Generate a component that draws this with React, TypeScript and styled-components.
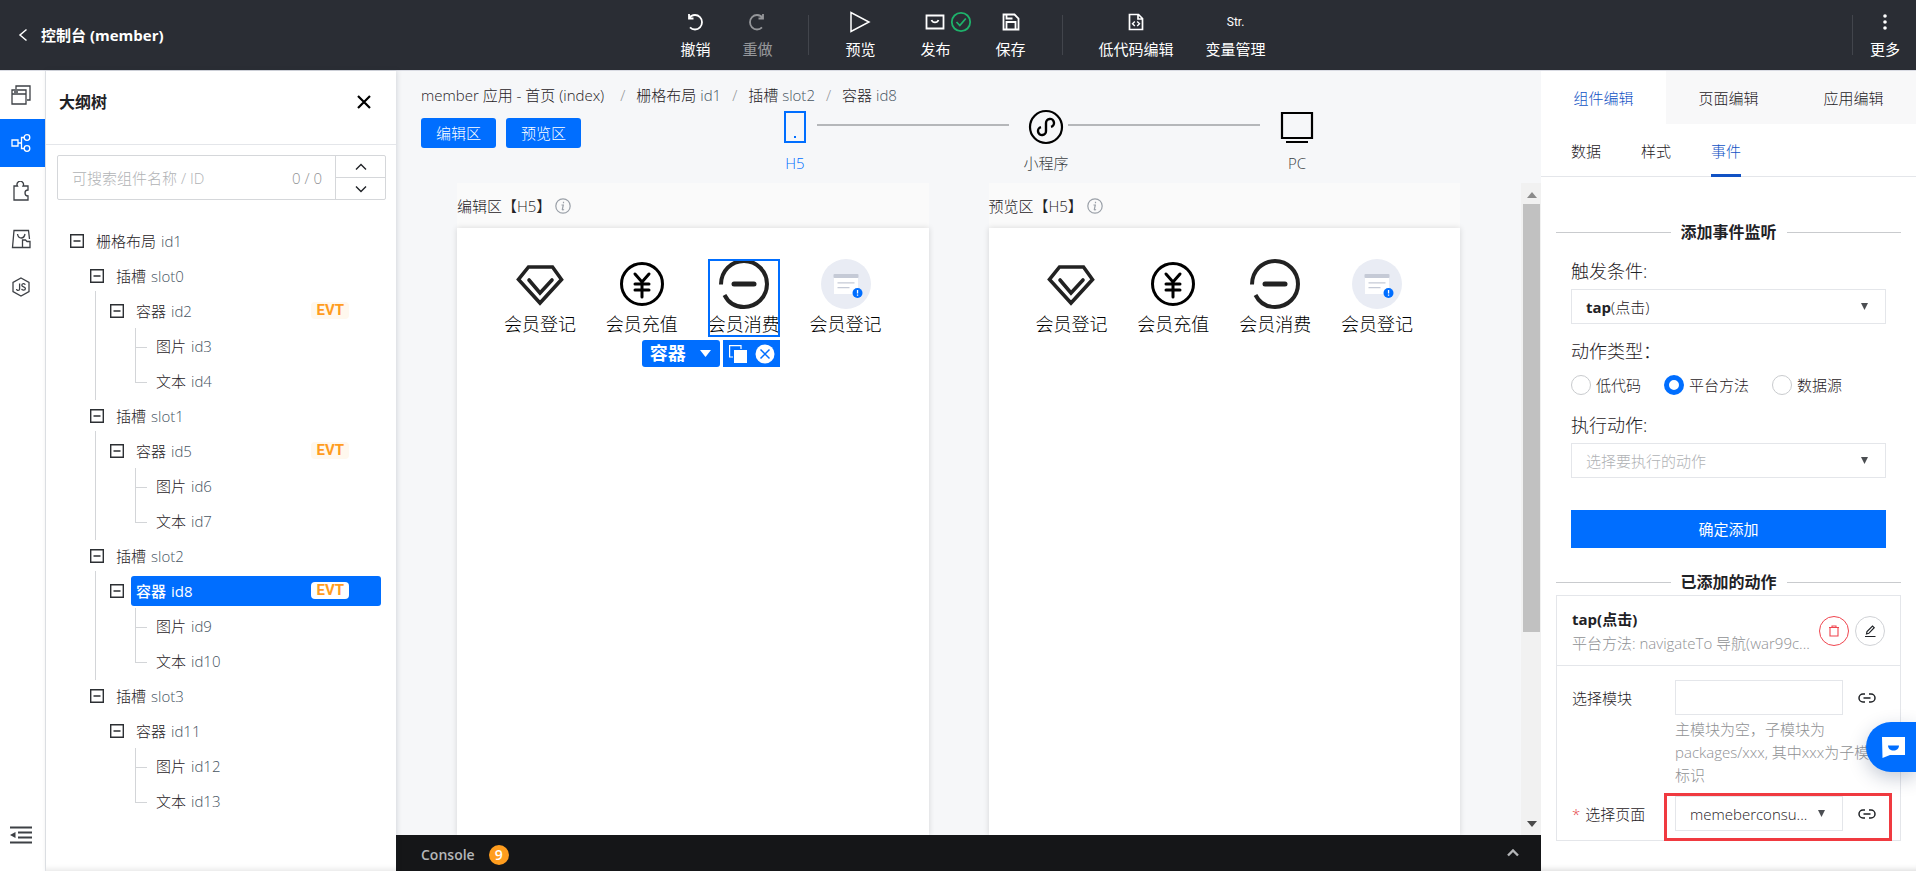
import React from "react";
import styled, { createGlobalStyle, css } from "styled-components";

const BLUE = "#006eff";
const LINK = "#1152c4";
const INK = "#1f2226";
const MUTED = "#8f9194";
const LINE = "#e4e6ea";

const GlobalStyle = createGlobalStyle`
  *, *::before, *::after { box-sizing: border-box; }
  body {
    margin: 0;
    color: ${INK};
    font-family: "Open Sans", "Noto Sans CJK SC", sans-serif;
    font-size: 15px;
    font-weight: 300;
    line-height: 24px;
  }
  button, input, select { font: inherit; color: inherit; }
  button { border: 0; padding: 0; background: none; cursor: pointer; }
  h2, h3, p, ul { margin: 0; padding: 0; }
  ul { list-style: none; }
  b { font-weight: 700; }
  a { color: inherit; text-decoration: none; }
  svg { display: block; flex: none; }
`;

/* ---------- shell ---------- */

const Shell = styled.div`
  display: flex;
  flex-direction: column;
  height: 100vh;
  overflow: hidden;
`;

const Body = styled.div`
  flex: 1;
  min-height: 0;
  display: flex;
  border-top: 1px solid #d9dbe3;
`;

const TopBar = styled.header`
  flex: none;
  height: 70px;
  padding: 0 16px;
  display: grid;
  grid-template-columns: 1fr auto 1fr;
  align-items: center;
  color: #fff;
  background: #2a2d34;
  font-weight: 400;
`;

const BackLink = styled.a`
  display: flex;
  align-items: center;
  gap: 13px;
  font-weight: 700;
`;

const Tools = styled.nav`
  display: flex;
  align-items: center;
  gap: 36px;
  margin-left: 30px;
`;

const ToolGroup = styled.div<{ $gap: number }>`
  display: flex;
  gap: ${(p) => p.$gap}px;
`;

const Tool = styled.button<{ $off?: boolean }>`
  position: relative;
  display: flex;
  flex-direction: column;
  align-items: center;
  gap: 4px;
  padding-top: 1px;
  white-space: nowrap;
  opacity: ${(p) => (p.$off ? 0.5 : 1)};
`;

const ToolIcon = styled.span`
  display: flex;
  align-items: center;
  justify-content: center;
  height: 22px;
  font-family: Roboto, sans-serif;
  font-size: 12px;
`;

const DoneBadge = styled.span`
  position: absolute;
  top: 1px;
  left: 30px;
`;

const Separator = styled.span`
  width: 1px;
  height: 40px;
  background: #42454c;
`;

const MoreArea = styled.div`
  display: flex;
  justify-content: flex-end;
  align-items: center;
  gap: 17px;
`;

/* ---------- icon rail ---------- */

const Rail = styled.nav`
  flex: none;
  width: 46px;
  display: flex;
  flex-direction: column;
  border-right: 1px solid ${LINE};
  background: #fff;
`;

const RailButton = styled.button<{ $active?: boolean; $last?: boolean }>`
  width: 45px;
  height: 48px;
  padding-right: 4px;
  display: flex;
  align-items: center;
  justify-content: center;
  color: ${(p) => (p.$active ? "#fff" : "#3d4045")};
  background: ${(p) => (p.$active ? BLUE : "transparent")};
  ${(p) =>
    p.$last &&
    css`
      margin-top: auto;
      margin-bottom: 12px;
    `}
`;

/* ---------- outline panel ---------- */

const Outline = styled.aside`
  flex: none;
  width: 350px;
  display: flex;
  flex-direction: column;
  background: #fff;
  box-shadow: 1px 0 5px rgba(40, 50, 70, 0.16), inset 0 -7px 6px -6px rgba(0, 0, 0, 0.12);
  z-index: 1;
`;

const OutlineHead = styled.div`
  height: 74px;
  padding: 0 25px 11px 13px;
  display: flex;
  align-items: center;
  justify-content: space-between;
  border-bottom: 1px solid ${LINE};
`;

const OutlineTitle = styled.h2`
  font-size: 16px;
  font-weight: 700;
`;

const Search = styled.div`
  display: flex;
  height: 45px;
  margin: 10px 10px 23px 11px;
  border: 1px solid #d5d7da;
  border-radius: 2px;
`;

const SearchInput = styled.input`
  flex: 1;
  min-width: 0;
  padding: 0 14px;
  border: 0;
  outline: 0;
  background: none;
  &::placeholder { color: #b0b2b5; opacity: 1; }
`;

const SearchCount = styled.span`
  align-self: center;
  padding-right: 13px;
  color: ${MUTED};
`;

const Stepper = styled.div`
  width: 50px;
  display: flex;
  flex-direction: column;
  border-left: 1px solid #d5d7da;
`;

const StepButton = styled.button`
  flex: 1;
  display: flex;
  align-items: center;
  justify-content: center;
  & + & { border-top: 1px solid #d5d7da; }
`;

const Tree = styled.ul`
  padding: 0 15px 0 24px;
`;

const Branch = styled.ul<{ $guide?: boolean }>`
  position: relative;
  padding-left: 20px;
  ${(p) =>
    p.$guide &&
    css`
      &::before {
        content: "";
        position: absolute;
        left: 5px;
        top: -2px;
        bottom: -2px;
        border-left: 1px solid #d3d5d8;
      }
    `}
`;

const TreeRow = styled.div`
  display: flex;
  align-items: center;
  gap: 7px;
  height: 35px;
`;

const Toggle = styled.button`
  width: 14px;
  height: 14px;
  color: #2c2f33;
`;

const LeafGuide = styled.span<{ $last: boolean }>`
  position: relative;
  width: 14px;
  height: 35px;
  &::before {
    content: "";
    position: absolute;
    left: 5px;
    top: 0;
    width: 12px;
    height: 20px;
    border-left: 1px solid #d3d5d8;
    border-bottom: 1px solid #d3d5d8;
  }
  &::after {
    content: "";
    position: absolute;
    left: 5px;
    top: 20px;
    bottom: 0;
    border-left: ${(p) => (p.$last ? 0 : 1)}px solid #d3d5d8;
  }
`;

const NodeLabel = styled.button<{ $selected?: boolean }>`
  flex: 1;
  height: 30px;
  padding: 0 32px 0 5px;
  display: flex;
  align-items: center;
  gap: 5px;
  border-radius: 3px;
  color: ${(p) => (p.$selected ? "#fff" : INK)};
  font-weight: ${(p) => (p.$selected ? 500 : 300)};
  background: ${(p) => (p.$selected ? BLUE : "transparent")};
`;

const NodeId = styled.span<{ $selected?: boolean }>`
  color: ${(p) => (p.$selected ? "#fff" : "#46545f")};
`;

const EvtTag = styled.span<{ $selected?: boolean }>`
  margin-left: auto;
  padding: 0 5px;
  border-radius: 4px;
  color: #ff9d1e;
  background: ${(p) => (p.$selected ? "#fff" : "#fff8ee")};
  font-family: Roboto, sans-serif;
  font-size: 15px;
  font-weight: 700;
  line-height: 17px;
`;

/* ---------- workspace ---------- */

const Main = styled.main`
  flex: 1;
  min-width: 0;
  display: flex;
  flex-direction: column;
  background: #f6f7f9;
`;

const Crumbs = styled.nav`
  display: flex;
  gap: 11px;
  padding: 12px 25px 0;
  white-space: nowrap;
`;

const AppCrumb = styled.a`
  margin-right: 5px;
`;

const CrumbSlash = styled.span`
  color: ${MUTED};
`;

const CrumbId = styled.span`
  color: #46545f;
`;

const ViewBar = styled.div`
  display: flex;
  height: 76px;
  padding: 0 30px 0 25px;
`;

const AreaButtons = styled.div`
  display: flex;
  gap: 10px;
  padding-top: 11px;
`;

const AreaButton = styled.button`
  width: 75px;
  height: 30px;
  border-radius: 3px;
  color: #fff;
  background: ${BLUE};
`;

const Devices = styled.div`
  flex: 1;
  display: flex;
  justify-content: center;
`;

const Device = styled.button<{ $active?: boolean }>`
  width: 44px;
  height: 68px;
  display: flex;
  flex-direction: column;
  align-items: center;
  gap: 4px;
  white-space: nowrap;
  color: ${(p) => (p.$active ? BLUE : "#3c3f44")};
`;

const DeviceIcon = styled.span<{ $active?: boolean }>`
  display: flex;
  align-items: center;
  height: 40px;
  color: ${(p) => (p.$active ? BLUE : "#000")};
`;

const DeviceLine = styled.span`
  width: 192px;
  height: 2px;
  margin: 17px 15px 0 0;
  background: #b5b7ba;
`;

const Stage = styled.div`
  flex: 1;
  min-height: 0;
  display: flex;
`;

const Frames = styled.div`
  flex: 1;
  min-width: 0;
  display: flex;
  gap: 60px;
  padding: 0 61px;
`;

const Frame = styled.section`
  flex: 1;
  min-width: 0;
  display: flex;
  flex-direction: column;
  background: #fafafa;
`;

const FrameTitle = styled.h3`
  display: flex;
  align-items: center;
  gap: 4px;
  height: 45px;
  font-size: 15px;
  font-weight: 300;
`;

const Phone = styled.div`
  flex: 1;
  padding: 31px 32px 0;
  display: flex;
  justify-content: space-around;
  align-items: flex-start;
  background: #fff;
  box-shadow: 0 0 6px rgba(0, 0, 0, 0.14);
  clip-path: inset(-6px -6px 0 -6px);
`;

const Entry = styled.div<{ $selected?: boolean }>`
  position: relative;
  height: 78px;
  display: flex;
  flex-direction: column;
  align-items: center;
  gap: 3px;
  color: #000;
  font-size: 18px;
  white-space: nowrap;
  outline: ${(p) => (p.$selected ? `2px solid ${BLUE}` : "0")};
  outline-offset: -2px;
`;

const SelectionTools = styled.div`
  position: absolute;
  top: 81px;
  right: 0;
  display: flex;
  gap: 3px;
  height: 27px;
  color: #fff;
`;

const SelectionName = styled.button`
  display: flex;
  align-items: center;
  gap: 14px;
  padding: 0 9px 0 8px;
  border-radius: 3px;
  font-size: 18px;
  font-weight: 700;
  line-height: 27px;
  background: ${BLUE};
`;

const SelectionActions = styled.div`
  display: flex;
  align-items: center;
  gap: 8px;
  padding: 0 5px 0 6px;
  background: ${BLUE};
`;

const Scroll = styled.div`
  flex: none;
  width: 20px;
  padding: 9px 1px 8px 2px;
  display: flex;
  flex-direction: column;
  align-items: center;
  background: #f1f1f1;
`;

const ScrollTrack = styled.div`
  flex: 1;
  align-self: stretch;
  margin: 6px 0;
`;

const ScrollThumb = styled.div`
  height: 70%;
  background: #c1c1c1;
`;

const ConsoleBar = styled.footer`
  flex: none;
  display: flex;
  align-items: center;
  justify-content: space-between;
  height: 36px;
  padding: 0 22px 0 25px;
  color: #b4b6b8;
  background: #151618;
`;

const ConsoleTitle = styled.div`
  display: flex;
  align-items: center;
  gap: 14px;
  padding-top: 3px;
  font-size: 14px;
  font-weight: 600;
`;

const Count = styled.span`
  width: 20px;
  height: 20px;
  border-radius: 10px;
  color: #fff;
  background: #ff9d1e;
  line-height: 20px;
  text-align: center;
`;

/* ---------- properties panel ---------- */

const Props = styled.aside`
  flex: none;
  width: 375px;
  display: flex;
  flex-direction: column;
  background: #fff;
  box-shadow: inset 0 -7px 6px -6px rgba(0, 0, 0, 0.16);
`;

const Tabs = styled.div`
  display: flex;
  height: 53px;
`;

const Tab = styled.button<{ $active?: boolean }>`
  flex: 1;
  color: ${(p) => (p.$active ? LINK : INK)};
  background: ${(p) => (p.$active ? "#fff" : "#f8f8f9")};
`;

const SubTabs = styled.div`
  display: flex;
  gap: 40px;
  height: 53px;
  padding: 0 30px;
  border-bottom: 1px solid ${LINE};
`;

const SubTab = styled.button<{ $active?: boolean }>`
  height: 53px;
  padding-top: 3px;
  border-bottom: 3px solid ${(p) => (p.$active ? LINK : "transparent")};
  color: ${(p) => (p.$active ? LINK : INK)};
`;

const SectionTitle = styled.h3<{ $top: number }>`
  display: flex;
  align-items: center;
  gap: 10px;
  margin: ${(p) => p.$top}px 15px 0;
  font-size: 16px;
  font-weight: 600;
  &::before, &::after {
    content: "";
    flex: 1;
    height: 1px;
    background: #c9cbce;
  }
`;

const Form = styled.form`
  display: flex;
  flex-direction: column;
  padding: 15px 30px 0;
`;

const FieldLabel = styled.label`
  margin-bottom: 6px;
  font-size: 18px;
`;

const SelectShell = styled.div<{ $gap?: number; $tone?: string }>`
  position: relative;
  display: flex;
  align-items: center;
  justify-content: space-between;
  height: 35px;
  margin-bottom: ${(p) => p.$gap ?? 0}px;
  padding: 0 17px 0 14px;
  border: 1px solid ${LINE};
  color: ${(p) => p.$tone ?? INK};
  svg { color: #4b4e52; }
`;

const SelectValue = styled.span`
  pointer-events: none;
`;

const CoverSelect = styled.select`
  position: absolute;
  inset: 0;
  width: 100%;
  opacity: 0;
`;

const PlainSelect = styled.select`
  flex: 1;
  min-width: 0;
  padding: 0;
  border: 0;
  outline: 0;
  appearance: none;
  background: none;
`;

const RadioRow = styled.div`
  display: flex;
  gap: 23px;
  height: 20px;
  margin: 6px 0 18px;
`;

const RadioLabel = styled.label`
  display: flex;
  align-items: center;
  gap: 5px;
`;

const Radio = styled.input`
  width: 20px;
  height: 20px;
  margin: 0;
  border: 1px solid #c9cbce;
  border-radius: 50%;
  appearance: none;
  background: #fff;
  &:checked { border: 5px solid ${BLUE}; }
`;

const Submit = styled.button`
  height: 38px;
  color: #fff;
  background: ${BLUE};
  font-weight: 400;
`;

const Card = styled.div`
  margin: 1px 15px 0;
  border: 1px solid ${LINE};
`;

const CardHead = styled.div`
  display: flex;
  align-items: center;
  gap: 6px;
  height: 70px;
  padding: 0 15px;
  border-bottom: 1px solid ${LINE};
`;

const CardText = styled.div`
  flex: 1;
  min-width: 0;
  white-space: nowrap;
`;

const CardName = styled.div`
  font-weight: 700;
`;

const CardNote = styled.div`
  color: ${MUTED};
`;

const RoundButton = styled.button<{ $danger?: boolean }>`
  flex: none;
  width: 30px;
  height: 30px;
  display: flex;
  align-items: center;
  justify-content: center;
  border: 1px solid ${(p) => (p.$danger ? "#f0454f" : "#d0d2d6")};
  border-radius: 50%;
  color: ${(p) => (p.$danger ? "#f0454f" : INK)};
`;

const CardField = styled.div<{ $top: number }>`
  display: grid;
  grid-template-columns: 103px 168px 1fr;
  align-items: center;
  margin-top: ${(p) => p.$top}px;
  padding-left: 15px;
`;

const TextBox = styled.input`
  width: 100%;
  height: 35px;
  padding: 0 14px;
  border: 1px solid ${LINE};
  outline: 0;
`;

const Help = styled.p`
  margin-top: 3px;
  padding-left: 118px;
  color: ${MUTED};
  line-height: 23px;
  white-space: nowrap;
`;

const Required = styled.span`
  margin-right: 5px;
  color: #e54545;
`;

const LinkButton = styled.button`
  margin-left: 15px;
`;

const Highlight = styled.div`
  position: relative;
  margin-top: 9px;
  padding-bottom: 9px;
  &::after {
    content: "";
    position: absolute;
    top: -3px;
    bottom: -1px;
    left: 107px;
    right: 8px;
    border: 3px solid #f03a40;
    pointer-events: none;
  }
`;

const ChatButton = styled.button`
  position: fixed;
  right: 0;
  bottom: 99px;
  width: 50px;
  height: 50px;
  padding-left: 16px;
  border-radius: 25px 0 0 25px;
  background: ${BLUE};
  box-shadow: 0 6px 18px rgba(30, 50, 90, 0.25);
  z-index: 2;
`;

/* ---------- drawings ---------- */

type SvgProps = { w: number; h?: number; sw?: number; children: React.ReactNode };

const Svg = ({ w, h = w, sw = 1.5, children }: SvgProps) => (
  <svg width={w} height={h} viewBox={`0 0 ${w} ${h}`} fill="none" stroke="currentColor" strokeWidth={sw} aria-hidden>
    {children}
  </svg>
);

const UndoIcon = () => (
  <Svg w={20} sw={1.8}>
    <path d="M4 2v4.500h4.500M4.200 6.300C5.500 4 7.600 3 10 3c3.900 0 7 3.200 7 7.200s-3.100 7.300-7 7.300c-2 0-3.700-.8-5-2.200" />
  </Svg>
);
const RedoIcon = () => (
  <Svg w={20} sw={1.8}>
    <path d="M16 2v4.500h-4.500M15.800 6.300C14.500 4 12.400 3 10 3c-3.900 0-7 3.200-7 7.200s3.100 7.300 7 7.300c2 0 3.700-.8 5-2.200" />
  </Svg>
);
const PlayIcon = () => (
  <Svg w={22}>
    <path d="M2 1.5v19L20 11z" />
  </Svg>
);
const PublishIcon = () => (
  <Svg w={20} h={16} sw={1.8}>
    <path d="M1.500 1.500h17v13h-17z" />
    <path d="M6.500 6c.8 1.800 2 2.400 3.500 2.400s2.700-.6 3.500-2.400" />
  </Svg>
);
const CheckBadgeIcon = () => (
  <Svg w={22} sw={1.8}>
    <circle cx="11" cy="11" r="9.200" stroke="#1eb26b" />
    <path d="M6.500 11l3.300 3.500 6-7" stroke="#1eb26b" />
  </Svg>
);
const SaveIcon = () => (
  <Svg w={18} sw={1.8}>
    <path d="M1.500 1.500h11l4 4v11h-15zM4.500 16.500V9h9v7.500M4.500 1.500v4h6" />
  </Svg>
);
const CodeFileIcon = () => (
  <Svg w={16} h={18} sw={1.7}>
    <path d="M1.500 1.500h9l4 4v11h-13zM10 1.500v4.500h4.500" />
    <path d="M6.800 8.500l-2.300 2.300 2.300 2.300M9.200 8.500l2.300 2.300-2.300 2.300" strokeWidth="1.400" />
  </Svg>
);
const MoreIcon = () => (
  <Svg w={4} h={18}>
    <g fill="currentColor" stroke="none">
      <circle cx="2" cy="3" r="1.800" />
      <circle cx="2" cy="9" r="1.800" />
      <circle cx="2" cy="15" r="1.800" />
    </g>
  </Svg>
);
const BackIcon = () => (
  <Svg w={12} h={14}>
    <path d="M10.500 1.500L4 7l6.500 5.500" />
  </Svg>
);
const PagesIcon = () => (
  <Svg w={20} sw={1.3}>
    <path d="M1 5h14v14H1zM1 9h14M5 4V1h14v14h-3M3 7h4" />
  </Svg>
);
const TreeIcon = () => (
  <Svg w={20} sw={1.3}>
    <path d="M1 7h6v6H1zM7 10h3.500M13.200 4.500h-2.700v11h2.700" />
    <circle cx="16" cy="4.500" r="2.800" />
    <circle cx="16" cy="15.500" r="2.800" />
  </Svg>
);
const PuzzleIcon = () => (
  <Svg w={20} sw={1.3}>
    <path d="M3 5h3.500a3.200 3.200 0 1 1 5.500 0h5v4a3 3 0 1 0 0 6v4H3z" />
  </Svg>
);
const MarketIcon = () => (
  <Svg w={20} sw={1.3}>
    <path d="M11 18.500H1.500L3 1.500h14.500L18.500 10M6.500 5c.5 3 1.700 4 3.700 4s3.200-1 3.800-4M11.500 11h3l1.500 1.500h3v6h-7.500z" />
  </Svg>
);
const JsIcon = () => (
  <Svg w={20} sw={1.3}>
    <path d="M10 1l8 4.500v9L10 19l-8-4.500v-9zM8.600 6.500v5.400c0 2-3 2-3 0M14.200 7.800c-.4-1.600-3.400-1.500-3.400.5 0 1.900 3.600 1.200 3.600 3.200 0 2.200-3.400 2.200-3.800.4" />
  </Svg>
);
const CollapseIcon = () => (
  <Svg w={22} h={18} sw={2}>
    <path d="M0 1.500h22M8 6.500h14M8 11.500h14M0 16.500h22" />
    <path d="M5.500 6v6L0 9z" fill="currentColor" stroke="none" />
  </Svg>
);
const CloseIcon = () => (
  <Svg w={14} sw={2.2}>
    <path d="M1 1l12 12M13 1L1 13" stroke="#000" />
  </Svg>
);
const Chevron = ({ up, sw = 1.4 }: { up?: boolean; sw?: number }) => (
  <Svg w={12} h={8} sw={sw}>
    <path d={up ? "M1 6.500l5-5 5 5" : "M1 1.500l5 5 5-5"} />
  </Svg>
);
const MinusBoxIcon = () => (
  <Svg w={14} sw={1.4}>
    <path d="M.7.7h12.600v12.600H.7zM3.500 7h7" />
  </Svg>
);
const InfoIcon = () => (
  <Svg w={16} sw={1.2}>
    <g stroke="#9aa0a8">
      <circle cx="8" cy="8" r="7.200" />
      <path d="M6.500 7h1.800l-1 4.500c0 .6 1 .5 1.600-.2M8.500 3.800v1.500" />
    </g>
  </Svg>
);
const Triangle = ({ w = 7, h = 7 }: { w?: number; h?: number }) => (
  <Svg w={w} h={h}>
    <path d={`M0 0h${w}l${-w / 2} ${h}z`} fill="currentColor" stroke="none" />
  </Svg>
);
const ScrollArrow = ({ up }: { up?: boolean }) => (
  <Svg w={10} h={6}>
    <path d={up ? "M0 6h10L5 0z" : "M0 0h10L5 6z"} fill={up ? "#8b8b8b" : "#4a4a4a"} stroke="none" />
  </Svg>
);
const PhoneIcon = () => (
  <Svg w={22} h={34} sw={2}>
    <path d="M1 2h20v30H1zM10 27h2" />
  </Svg>
);
const MiniAppIcon = () => (
  <Svg w={40} sw={2.2}>
    <circle cx="20" cy="20" r="16" />
    <path d="M20 16v8a4 4 0 1 1-5-3.800M20 24v-8a4 4 0 1 1 5 3.800" strokeWidth="2.400" />
  </Svg>
);
const PcIcon = () => (
  <Svg w={34} sw={2.2}>
    <path d="M2 3h30v25H2zM6 32h22" />
  </Svg>
);
const DiamondIcon = () => (
  <Svg w={50} sw={3.6}>
    <g stroke="#222">
      <path d="M13.500 8h24L46.500 20.500 25 44 3.500 20.500z" />
      <path d="M14 21l11 13 12-13" strokeLinecap="round" />
    </g>
  </Svg>
);
const YuanIcon = () => (
  <Svg w={50} sw={3}>
    <circle cx="25" cy="25" r="20.500" />
    <path d="M18 15l7 8 7-8M25 23v15M18 25h14M18 31h14" strokeLinecap="round" />
  </Svg>
);
const MinusCircleIcon = () => (
  <Svg w={50} sw={4}>
    <path d="M2 25.500C2 12 12.300 2 25 2s23 10.300 23 23-10.300 23-23 23c-8 0-15.500-4-19.500-12" stroke="#222" />
    <path d="M15 25h20" stroke="#222" strokeLinecap="round" strokeWidth="5" />
  </Svg>
);
const FormIcon = () => (
  <Svg w={50}>
    <g stroke="none">
      <circle cx="25" cy="25" r="25" fill="#e9ecf4" />
      <path d="M13 19h24v16H13z" fill="#fff" />
      <rect x="12.500" y="15" width="25" height="4" rx="1" fill="#c5cad6" />
      <path d="M16.500 23.200h17v1.200h-17zM16.500 28h12v1.200h-12z" fill="#c5cad6" />
      <circle cx="36.500" cy="34" r="5" fill={BLUE} />
      <path d="M35.900 31h1.300v3.600h-1.300zM35.900 35.600h1.300v1.200h-1.300z" fill="#fff" />
    </g>
  </Svg>
);
const CopyIcon = () => (
  <Svg w={18} sw={1.2}>
    <path d="M12 4V.6H.6V12H4" />
    <path d="M5 5h13v13H5z" fill="#fff" stroke="none" />
  </Svg>
);
const RemoveIcon = () => (
  <Svg w={20}>
    <circle cx="10" cy="10" r="9.500" fill="#fff" stroke="none" />
    <path d="M5.500 5.500l9 9M14.500 5.500l-9 9" stroke={BLUE} />
  </Svg>
);
const TrashIcon = () => (
  <Svg w={12} sw={1.1}>
    <path d="M1 2.500h10M2 2.500v8.500h8V2.500M4 2.500V1h4v1.500" />
  </Svg>
);
const PenIcon = () => (
  <Svg w={12} sw={1.2}>
    <path d="M1 11.500h10.500M2.500 9l.5-2.500L8.500 1l1.700 1.700L4.800 8.300z" />
  </Svg>
);
const LinkIcon = () => (
  <Svg w={18} h={10}>
    <path d="M7 1H5a4 4 0 0 0 0 8h2M11 1h2a4 4 0 0 1 0 8h-2M5.500 5h7" />
  </Svg>
);
const ChatIcon = () => (
  <Svg w={23} h={21}>
    <path d="M0 0h23v18H8l-7.500 3z" fill="#fff" stroke="none" />
    <path d="M6 8.500h11c0 3-2.500 5-5.500 5S6 11.500 6 8.500z" fill={BLUE} stroke="none" />
  </Svg>
);

/* ---------- data ---------- */

type TreeItem = { name: string; id: string; evt?: boolean; selected?: boolean; guide?: boolean; children?: TreeItem[] };

const slot = (n: number, first: number, evt: boolean): TreeItem => ({
  name: "插槽",
  id: `slot${n}`,
  guide: n < 3,
  children: [
    {
      name: "容器",
      id: `id${first}`,
      evt,
      selected: first === 8,
      children: [
        { name: "图片", id: `id${first + 1}` },
        { name: "文本", id: `id${first + 2}` },
      ],
    },
  ],
});

const tree: TreeItem = {
  name: "栅格布局",
  id: "id1",
  children: [slot(0, 2, true), slot(1, 5, true), slot(2, 8, true), slot(3, 11, false)],
};

const entries = [
  { name: "会员登记", icon: <DiamondIcon /> },
  { name: "会员充值", icon: <YuanIcon /> },
  { name: "会员消费", icon: <MinusCircleIcon /> },
  { name: "会员登记", icon: <FormIcon /> },
];

const crumbs = [
  { name: "栅格布局", id: "id1" },
  { name: "插槽", id: "slot2" },
  { name: "容器", id: "id8" },
];

/* ---------- parts ---------- */

const TreeNode = ({ item, last = true }: { item: TreeItem; last?: boolean }) => (
  <li>
    <TreeRow>
      {item.children ? (
        <Toggle aria-label="收起">
          <MinusBoxIcon />
        </Toggle>
      ) : (
        <LeafGuide $last={last} />
      )}
      <NodeLabel $selected={item.selected}>
        {item.name}
        <NodeId $selected={item.selected}>{item.id}</NodeId>
        {item.evt && <EvtTag $selected={item.selected}>EVT</EvtTag>}
      </NodeLabel>
    </TreeRow>
    {item.children && (
      <Branch $guide={item.guide}>
        {item.children.map((child, i) => (
          <TreeNode key={child.id} item={child} last={i === item.children!.length - 1} />
        ))}
      </Branch>
    )}
  </li>
);

type ToolItemProps = { icon: React.ReactNode; label: string; off?: boolean; badge?: React.ReactNode };

const ToolItem = ({ icon, label, off, badge }: ToolItemProps) => (
  <Tool $off={off} disabled={off}>
    <ToolIcon>{icon}</ToolIcon>
    {label}
    {badge && <DoneBadge>{badge}</DoneBadge>}
  </Tool>
);

const DeviceStep = ({ icon, label, active }: { icon: React.ReactNode; label: string; active?: boolean }) => (
  <Device $active={active}>
    <DeviceIcon $active={active}>{icon}</DeviceIcon>
    {label}
  </Device>
);

const PhoneFrame = ({ title, editing }: { title: string; editing?: boolean }) => (
  <Frame>
    <FrameTitle>
      {title}
      <InfoIcon />
    </FrameTitle>
    <Phone>
      {entries.map((entry, i) => {
        const selected = editing && i === 2;
        return (
          <Entry key={i} $selected={selected}>
            {entry.icon}
            {entry.name}
            {selected && (
              <SelectionTools>
                <SelectionName>
                  容器
                  <Triangle w={11} h={7} />
                </SelectionName>
                <SelectionActions>
                  <button aria-label="复制">
                    <CopyIcon />
                  </button>
                  <button aria-label="删除">
                    <RemoveIcon />
                  </button>
                </SelectionActions>
              </SelectionTools>
            )}
          </Entry>
        );
      })}
    </Phone>
  </Frame>
);

export default function App() {
  return (
    <Shell>
      <GlobalStyle />
      <TopBar>
        <BackLink href="#">
          <BackIcon />
          控制台 (member)
        </BackLink>
        <Tools>
          <ToolGroup $gap={32}>
            <ToolItem icon={<UndoIcon />} label="撤销" />
            <ToolItem icon={<RedoIcon />} label="重做" off />
          </ToolGroup>
          <Separator />
          <ToolGroup $gap={45}>
            <ToolItem icon={<PlayIcon />} label="预览" />
            <ToolItem icon={<PublishIcon />} label="发布" badge={<CheckBadgeIcon />} />
            <ToolItem icon={<SaveIcon />} label="保存" />
          </ToolGroup>
          <Separator />
          <ToolGroup $gap={32}>
            <ToolItem icon={<CodeFileIcon />} label="低代码编辑" />
            <ToolItem icon="Str." label="变量管理" />
          </ToolGroup>
        </Tools>
        <MoreArea>
          <Separator />
          <ToolItem icon={<MoreIcon />} label="更多" />
        </MoreArea>
      </TopBar>

      <Body>
        <Rail>
          <RailButton aria-label="页面"><PagesIcon /></RailButton>
          <RailButton aria-label="大纲树" $active><TreeIcon /></RailButton>
          <RailButton aria-label="组件"><PuzzleIcon /></RailButton>
          <RailButton aria-label="素材"><MarketIcon /></RailButton>
          <RailButton aria-label="代码"><JsIcon /></RailButton>
          <RailButton aria-label="收起" $last><CollapseIcon /></RailButton>
        </Rail>

        <Outline>
          <OutlineHead>
            <OutlineTitle>大纲树</OutlineTitle>
            <button aria-label="关闭"><CloseIcon /></button>
          </OutlineHead>
          <Search>
            <SearchInput aria-label="搜索组件" placeholder="可搜索组件名称 / ID" />
            <SearchCount>0 / 0</SearchCount>
            <Stepper>
              <StepButton aria-label="上一个"><Chevron up /></StepButton>
              <StepButton aria-label="下一个"><Chevron /></StepButton>
            </Stepper>
          </Search>
          <Tree>
            <TreeNode item={tree} />
          </Tree>
        </Outline>

        <Main>
          <Crumbs>
            <AppCrumb href="#">member 应用 - 首页 (index)</AppCrumb>
            {crumbs.map((c) => (
              <React.Fragment key={c.id}>
                <CrumbSlash>/</CrumbSlash>
                <a href="#">
                  {c.name} <CrumbId>{c.id}</CrumbId>
                </a>
              </React.Fragment>
            ))}
          </Crumbs>
          <ViewBar>
            <AreaButtons>
              <AreaButton>编辑区</AreaButton>
              <AreaButton>预览区</AreaButton>
            </AreaButtons>
            <Devices>
              <DeviceStep icon={<PhoneIcon />} label="H5" active />
              <DeviceLine />
              <DeviceStep icon={<MiniAppIcon />} label="小程序" />
              <DeviceLine />
              <DeviceStep icon={<PcIcon />} label="PC" />
            </Devices>
          </ViewBar>
          <Stage>
            <Frames>
              <PhoneFrame title="编辑区【H5】" editing />
              <PhoneFrame title="预览区【H5】" />
            </Frames>
            <Scroll>
              <ScrollArrow up />
              <ScrollTrack>
                <ScrollThumb />
              </ScrollTrack>
              <ScrollArrow />
            </Scroll>
          </Stage>
          <ConsoleBar>
            <ConsoleTitle>
              Console
              <Count>9</Count>
            </ConsoleTitle>
            <button aria-label="展开"><Chevron up sw={2.4} /></button>
          </ConsoleBar>
        </Main>

        <Props>
          <Tabs>
            <Tab $active>组件编辑</Tab>
            <Tab>页面编辑</Tab>
            <Tab>应用编辑</Tab>
          </Tabs>
          <SubTabs>
            <SubTab>数据</SubTab>
            <SubTab>样式</SubTab>
            <SubTab $active>事件</SubTab>
          </SubTabs>

          <SectionTitle $top={43}>添加事件监听</SectionTitle>
          <Form onSubmit={(e) => e.preventDefault()}>
            <FieldLabel htmlFor="trigger">触发条件:</FieldLabel>
            <SelectShell $gap={15}>
              <SelectValue aria-hidden>
                <b>tap</b>(点击)
              </SelectValue>
              <Triangle />
              <CoverSelect id="trigger">
                <option>tap(点击)</option>
              </CoverSelect>
            </SelectShell>
            <FieldLabel as="span" id="kind">动作类型：</FieldLabel>
            <RadioRow role="radiogroup" aria-labelledby="kind">
              <RadioLabel><Radio type="radio" name="kind" />低代码</RadioLabel>
              <RadioLabel><Radio type="radio" name="kind" defaultChecked />平台方法</RadioLabel>
              <RadioLabel><Radio type="radio" name="kind" />数据源</RadioLabel>
            </RadioRow>
            <FieldLabel htmlFor="action">执行动作:</FieldLabel>
            <SelectShell $gap={32} $tone="#b0b2b5">
              <PlainSelect id="action">
                <option>选择要执行的动作</option>
              </PlainSelect>
              <Triangle />
            </SelectShell>
            <Submit>确定添加</Submit>
          </Form>

          <SectionTitle $top={22}>已添加的动作</SectionTitle>
          <Card>
            <CardHead>
              <CardText>
                <CardName>tap(点击)</CardName>
                <CardNote>平台方法: navigateTo 导航(war99c...</CardNote>
              </CardText>
              <RoundButton $danger aria-label="删除"><TrashIcon /></RoundButton>
              <RoundButton aria-label="编辑"><PenIcon /></RoundButton>
            </CardHead>
            <CardField $top={14}>
              <label htmlFor="module">选择模块</label>
              <TextBox id="module" />
              <LinkButton aria-label="绑定模块"><LinkIcon /></LinkButton>
            </CardField>
            <Help>
              主模块为空，子模块为
              <br />
              packages/xxx, 其中xxx为子模块
              <br />
              标识
            </Help>
            <Highlight>
              <CardField $top={0}>
                <label htmlFor="page">
                  <Required>*</Required>选择页面
                </label>
                <SelectShell>
                  <PlainSelect id="page">
                    <option>memeberconsu...</option>
                  </PlainSelect>
                  <Triangle />
                </SelectShell>
                <LinkButton aria-label="绑定页面"><LinkIcon /></LinkButton>
              </CardField>
            </Highlight>
          </Card>
        </Props>
      </Body>

      <ChatButton aria-label="客服"><ChatIcon /></ChatButton>
    </Shell>
  );
}
